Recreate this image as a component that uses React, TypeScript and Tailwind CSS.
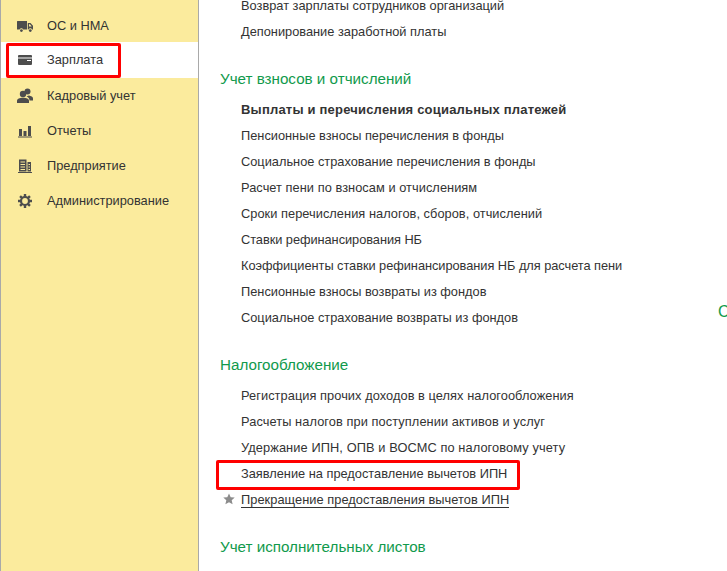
import React from 'react';

const navItems = [
    { label: 'ОС и НМА', icon: 'truck' },
    { label: 'Зарплата', icon: 'card', active: true },
    { label: 'Кадровый учет', icon: 'people' },
    { label: 'Отчеты', icon: 'chart' },
    { label: 'Предприятие', icon: 'building' },
    { label: 'Администрирование', icon: 'gear' },
];

const NavIcon = ({ name }: { name: string }) => {
    const cls = 'w-4 h-4 fill-[#4d4d4d]';
    if (name === 'truck') return (
        <svg viewBox="0 0 16 16" className={cls}>
            <path d="M0 3.500a.5.5 0 0 1 .5-.5H10v8.500H6.200a2 2 0 0 0-3.600 0H0z" />
            <path fillRule="evenodd" d="M10.800 5h2.700L16 7.800v3.700h-.9a2 2 0 0 0-3.600 0h-.7zM12 6.200v2.300h2.700l-1.800-2.300z" />
            <circle cx="4.400" cy="12.600" r="1.400" />
            <circle cx="13.300" cy="12.600" r="1.400" />
        </svg>
    );
    if (name === 'card') return (
        <svg viewBox="0 0 16 16" className={cls}>
            <path d="M2 3h12a1 1 0 0 1 1 1v1.500H1V4a1 1 0 0 1 1-1z" />
            <path fillRule="evenodd" d="M1 6.500h14V12a1 1 0 0 1-1 1H2a1 1 0 0 1-1-1zM10 8v1h4V8z" />
        </svg>
    );
    if (name === 'people') return (
        <svg viewBox="0 0 16 16" className={cls}>
            <circle cx="10.500" cy="3.600" r="3" />
            <path d="M12 7.500c2 .4 4 1.200 4 3v2h-3.500c0-2-1.200-3.200-3-4.200z" />
            <circle cx="6" cy="6" r="3.200" />
            <path d="M0 15v-2.200c0-2 2.500-3 6-3s6 1 6 3V15z" />
        </svg>
    );
    if (name === 'chart') return (
        <svg viewBox="0 0 16 16" className={cls}>
            <path d="M2 6h3v7H2zM6.500 8h3v5h-3zM11 3h3v10h-3zM1 13.500h14v1H1z" />
        </svg>
    );
    if (name === 'building') return (
        <svg viewBox="0 0 16 16" className={cls}>
            <path fillRule="evenodd" d="M2 1.500h7.500v12H2zM3.500 3.500v1H8v-1zm0 2.500v1H8V6zm0 2.500v1H8v-1zm0 2.500v1H8v-1z" />
            <path fillRule="evenodd" d="M10.500 4h3.500v9.500h-3.500zM11.500 6v1H13V6zm0 2.500v1H13v-1zm0 2.500v1H13v-1z" />
            <path d="M1 14h14v1H1z" />
        </svg>
    );
    return (
        <svg viewBox="0 0 16 16" className="w-4 h-4 fill-none stroke-[#4d4d4d]">
            <circle cx="8" cy="8" r="4" strokeWidth="2.200" />
            <path strokeWidth="2.400" d="M8 1v3M8 12v3M1 8h3M12 8h3M3.050 3.050l2.100 2.100M10.850 10.850l2.100 2.100M3.050 12.950l2.100-2.100M10.850 5.150l2.100-2.100" />
        </svg>
    );
};

const LinkRow = ({ children, bold, tracking = '' }: { children: React.ReactNode; bold?: boolean; tracking?: string }) => (
    <div className={`h-[26px] flex items-center pl-[42px] text-[#333333] ${tracking} ${bold ? 'text-[13px] font-bold tracking-[0.2px]' : 'text-[12.800px]'}`}>
        {children}
    </div>
);

const Heading = ({ children }: { children: React.ReactNode }) => (
    <div className="h-[26px] flex items-center pl-[21px] text-[15.200px] text-[#119a4c]">{children}</div>
);

export default function App() {
    return (
        <div className="relative w-[727px] h-[571px] overflow-hidden flex bg-white font-['Liberation_Sans',Arial,sans-serif]">
            <aside className="w-[199px] h-full shrink-0 bg-[#fbeb9d] border-l border-r border-[#a9a9a9] pt-[8px] text-[12.800px] text-[#333333]">
                {navItems.map(item => (
                    <div key={item.label} className={`flex items-center pl-[16px] gap-[14px] ${item.active ? 'h-[36px] -mt-px bg-white' : 'h-[35px]'}`}>
                        <NavIcon name={item.icon} />
                        <span>{item.label}</span>
                    </div>
                ))}
            </aside>

            <main className="flex-1 -mt-[7px]">
                <LinkRow>Возврат зарплаты сотрудников организаций</LinkRow>
                <LinkRow>Депонирование заработной платы</LinkRow>

                <div className="mt-[21px]"><Heading>Учет взносов и отчислений</Heading></div>
                <div className="mt-[5px]">
                    <LinkRow bold>Выплаты и перечисления социальных платежей</LinkRow>
                    <LinkRow>Пенсионные взносы перечисления в фонды</LinkRow>
                    <LinkRow>Социальное страхование перечисления в фонды</LinkRow>
                    <LinkRow tracking="tracking-[0.05px]">Расчет пени по взносам и отчислениям</LinkRow>
                    <LinkRow tracking="tracking-[0.04px]">Сроки перечисления налогов, сборов, отчислений</LinkRow>
                    <LinkRow tracking="tracking-[-0.05px]">Ставки рефинансирования НБ</LinkRow>
                    <LinkRow tracking="tracking-[-0.04px]">Коэффициенты ставки рефинансирования НБ для расчета пени</LinkRow>
                    <LinkRow>Пенсионные взносы возвраты из фондов</LinkRow>
                    <LinkRow>Социальное страхование возвраты из фондов</LinkRow>
                </div>

                <div className="mt-[21px]"><Heading>Налогообложение</Heading></div>
                <div className="mt-[5px]">
                    <LinkRow tracking="tracking-[0.06px]">Регистрация прочих доходов в целях налогообложения</LinkRow>
                    <LinkRow tracking="tracking-[0.08px]">Расчеты налогов при поступлении активов и услуг</LinkRow>
                    <LinkRow tracking="tracking-[0.1px]">Удержание ИПН, ОПВ и ВОСМС по налоговому учету</LinkRow>
                    <LinkRow>Заявление на предоставление вычетов ИПН</LinkRow>
                    <LinkRow tracking="tracking-[0.05px]">
                        <span className="relative border-b border-[#333333] leading-[15px]">
                            <svg viewBox="0 0 12 12" className="absolute -left-[18px] top-[1px] w-3 h-3 fill-[#8c8c8c]">
                                <path d="M6 .5l1.700 3.700 4 .4-3 2.700.9 4L6 9.200l-3.600 2.100.9-4-3-2.700 4-.4z" />
                            </svg>
                            Прекращение предоставления вычетов ИПН
                        </span>
                    </LinkRow>
                </div>

                <div className="mt-[21px]"><Heading>Учет исполнительных листов</Heading></div>
            </main>

            {/* red highlights drawn over the screenshot */}
            <div className="absolute left-[6px] top-[43px] w-[115px] h-[35px] border-[3px] border-[#ff0000] rounded-[2px]" />
            <div className="absolute left-[216px] top-[460px] w-[304px] h-[30px] border-[3px] border-[#ff0000] rounded-[2px]" />
            <div className="absolute left-[718px] top-[303px] text-[16px] leading-[18px] text-[#119a4c]">С</div>
        </div>
    );
}
